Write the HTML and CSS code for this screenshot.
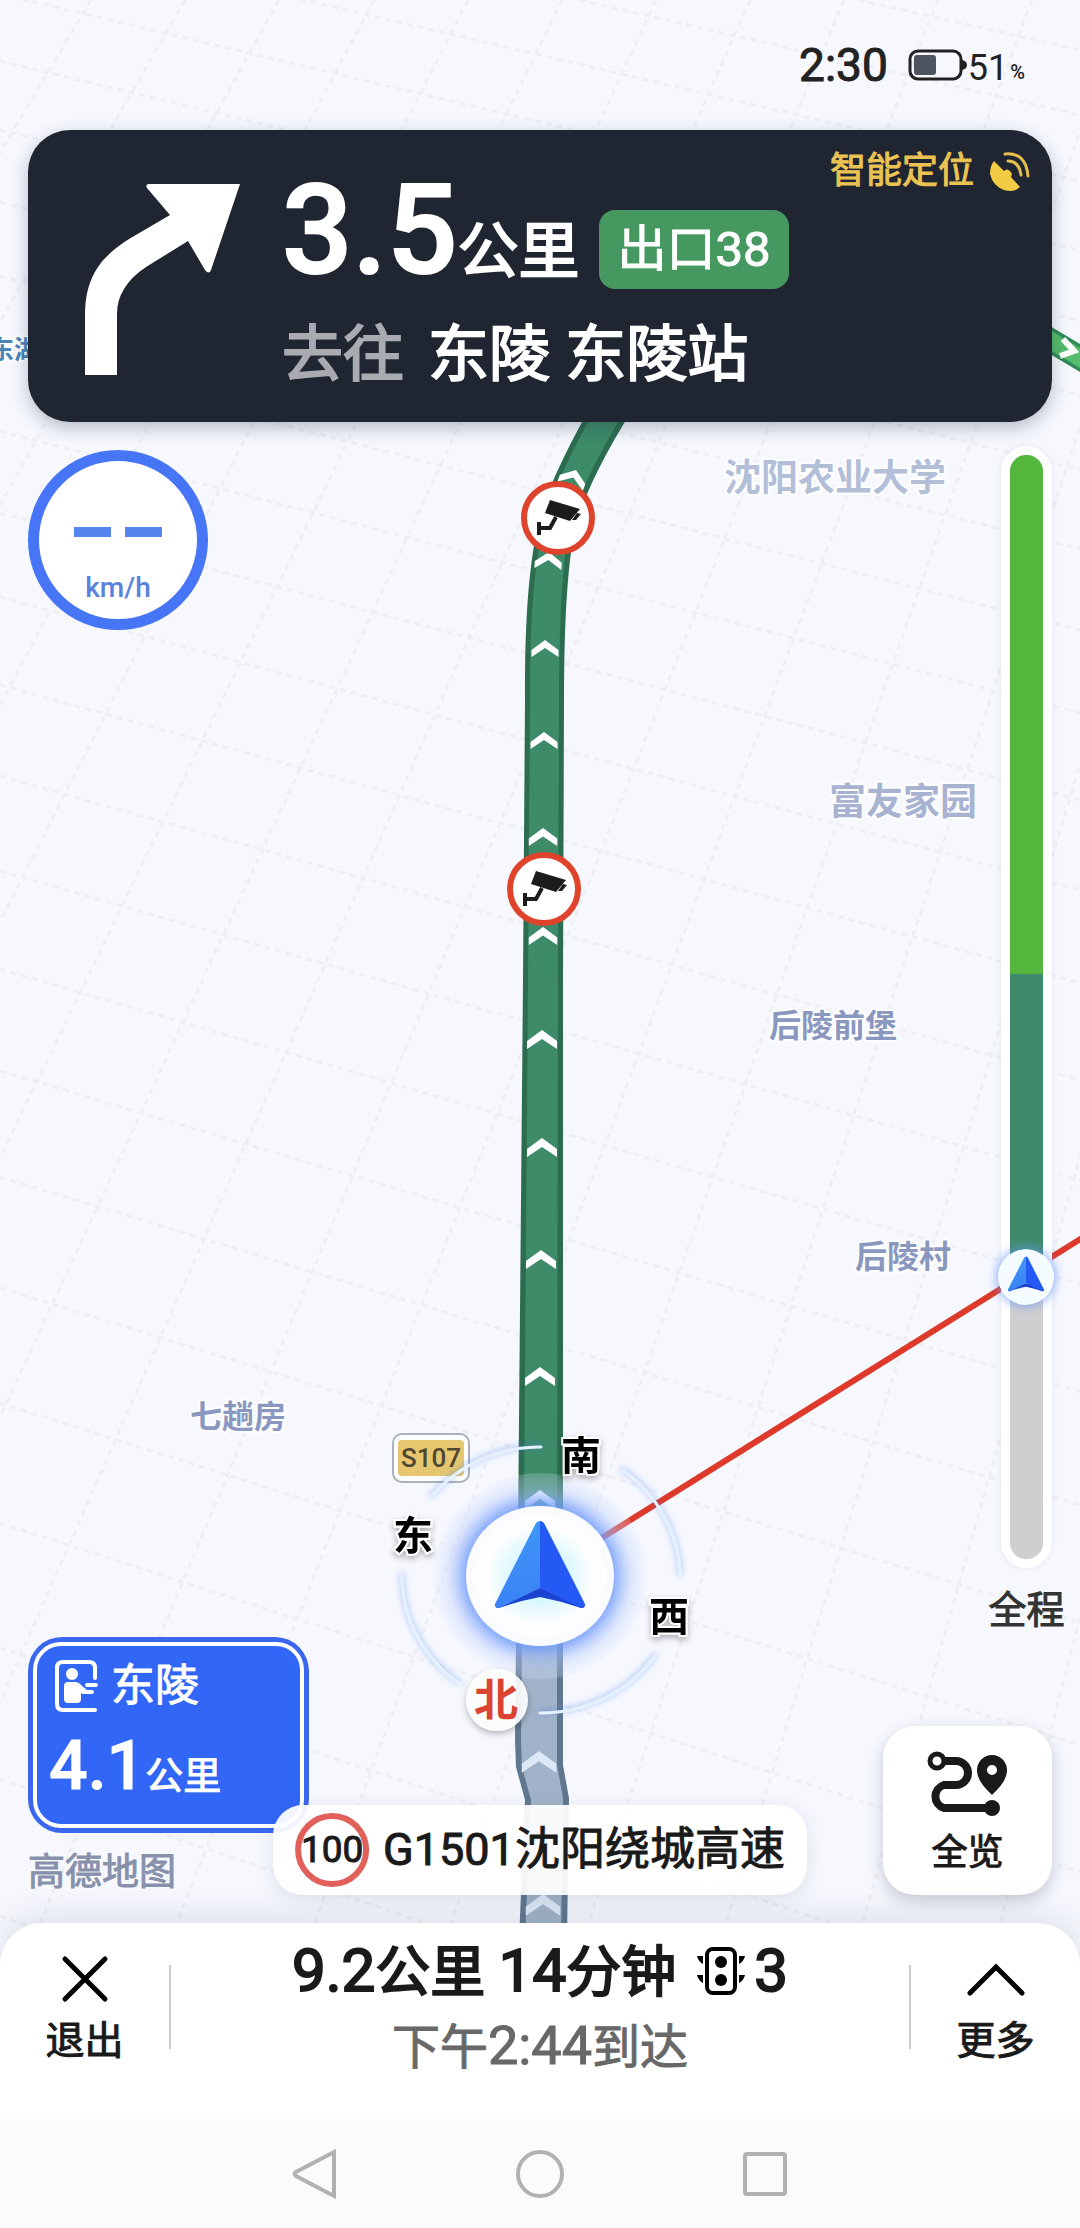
FILE: index.html
```html
<!DOCTYPE html>
<html lang="zh-CN">
<head>
<meta charset="utf-8">
<meta name="viewport" content="width=device-width, initial-scale=1">
<title>导航</title>
<link rel="stylesheet" href="styles.css">
</head>
<body>
<div class="app">
  <svg class="map" viewBox="0 0 1080 1940" role="img" aria-label="导航地图">
    <defs>
      <linearGradient id="fin" x1="0" y1="0" x2="0" y2="1">
        <stop offset="0" stop-color="#4096f8"/><stop offset="1" stop-color="#3a83f5"/>
      </linearGradient>
      <radialGradient id="halo">
        <stop offset="0.6" stop-color="#5d8bfb"/><stop offset="0.72" stop-color="#7ea5fb" stop-opacity="0.75"/>
        <stop offset="0.86" stop-color="#b9cdfb" stop-opacity="0.4"/><stop offset="1" stop-color="#dfe8fd" stop-opacity="0.2"/>
      </radialGradient>
      <radialGradient id="disc">
        <stop offset="0" stop-color="#aeefff"/><stop offset="0.45" stop-color="#d9f8ff"/><stop offset="0.8" stop-color="#fefefe"/>
      </radialGradient>
      <filter id="drop" x="-30%" y="-30%" width="160%" height="170%">
        <feDropShadow dx="0" dy="3" stdDeviation="3" flood-color="#000" flood-opacity="0.3"/>
      </filter>
      <filter id="soft" x="-20%" y="-20%" width="140%" height="140%">
        <feDropShadow dx="0" dy="-1" stdDeviation="3" flood-color="#3f74e8" flood-opacity="0.6"/>
      </filter>
      <symbol id="pointer" viewBox="0 0 90 88" overflow="visible">
        <path d="M45 67 L45 76 Q24 80 4 87 Q-1 87 1 82 Z M45 67 L45 76 Q66 80 86 87 Q91 87 89 82 Z" fill="#1c43cf"/>
        <path d="M45 0 V67 L4 87 Q-2 87 1 81 L41 2 Q43 0 45 0 Z" fill="url(#fin)"/>
        <path d="M45 0 V67 L86 87 Q92 87 89 81 L49 2 Q47 0 45 0 Z" fill="#2559f4"/>
      </symbol>
      <g id="camera">
        <circle r="34" fill="#fff" stroke="#e0432c" stroke-width="6"/>
        <path d="M-8-18 22-9 12 3-13-5Z M19-5 23-4 18 2 14 2Z" fill="#1c1c1c"/>
        <path d="M-2-1-8 10H-18 M-19 4V17" fill="none" stroke="#1c1c1c" stroke-width="4"/>
      </g>
      <path id="chevron" d="M0 0 15 11V19L0 9-15 19V11Z"/>
    </defs>

    <g id="grid" class="grid"></g>

    <text class="label station" x="-12" y="359">东湖</text>
    <path d="M1030 328 1100 370" stroke="#2f8b57" stroke-width="24"/>
    <path d="M1030 328 1100 370" stroke="#56bd6c" stroke-width="17"/>
    <path d="M1063 339 1074 351 1060 356" fill="none" stroke="#fff" stroke-width="6"/>

    <text class="label place-xl" x="724" y="491">沈阳农业大学</text>
    <text class="label place-xl place-lg" x="829" y="815">富友家园</text>
    <text class="label place" x="769" y="1037">后陵前堡</text>
    <text class="label place" x="855" y="1268">后陵村</text>
    <text class="label place" x="190" y="1428">七趟房</text>

    <path d="M516 1640 515 1740 516 1767 525 1800 519 1940H567L569 1798 563 1765V1640Z" fill="#5f7890"/>
    <path d="M522 1640 521 1740 522 1767 531 1800 525 1940H561L563 1798 557 1765V1640Z" fill="#a1b3c8"/>
    <path d="M600 390 Q556 466 542 510 Q524 570 525 700 L523 980 517 1640H563V980L564 700 Q564 570 577 520 Q595 466 645 390Z" fill="#2c6d50"/>
    <path d="M606 390 Q562 466 548 510 Q529 570 530 700 L528 980 523 1640H557L558 980 559 700 Q559 570 571 520 Q589 466 638 390Z" fill="#3d8b69"/>
    <g fill="#fff">
      <use href="#chevron" transform="translate(576 470) rotate(20) scale(0.9)"/>
      <use href="#chevron" transform="translate(549 552) rotate(4) scale(0.9)"/>
      <use href="#chevron" transform="translate(545 640) scale(0.9)"/>
      <use href="#chevron" transform="translate(544 732) scale(0.9)"/>
      <use href="#chevron" transform="translate(543 828) scale(0.95)"/>
      <use href="#chevron" transform="translate(543 927) scale(0.95)"/>
      <use href="#chevron" x="542" y="1030"/>
      <use href="#chevron" x="542" y="1138"/>
      <use href="#chevron" x="541" y="1250"/>
      <use href="#chevron" x="540" y="1367"/>
      <use href="#chevron" x="540" y="1490"/>
    </g>
    <g fill="#dce8f6">
      <use href="#chevron" transform="translate(539 1751) scale(1.15)"/>
      <use href="#chevron" transform="translate(543 1894) scale(1.15)"/>
    </g>
    <use href="#camera" x="558" y="518"/>
    <use href="#camera" x="544" y="889"/>

    <rect x="393" y="1434" width="76" height="48" rx="9" fill="#fff" stroke="#a9b1ba" stroke-width="2"/>
    <rect x="398" y="1440" width="66" height="36" rx="4" fill="#e6c770"/>
    <text class="road-no" x="431" y="1467">S107</text>

    <path d="M1090 1233 560 1564" stroke="#dd3a2c" stroke-width="6"/>

    <ellipse cx="540" cy="1576" rx="107" ry="103" fill="url(#halo)"/>
    <ellipse cx="540" cy="1576" rx="74" ry="70" fill="#fff" fill-opacity="0.96"/>
    <ellipse cx="540" cy="1576" rx="66" ry="62" fill="url(#disc)" fill-opacity="0.9"/>
    <use href="#pointer" x="495" y="1521" width="90" height="88"/>
    <g fill="none" stroke="#e4f1ff" stroke-width="3" stroke-linecap="round" filter="url(#soft)">
      <path d="M541 1447 A139 133 0 0 0 431 1497"/>
      <path d="M622 1470 A139 133 0 0 1 680 1576"/>
      <path d="M655 1656 A139 133 0 0 1 540 1713"/>
      <path d="M402 1575 A139 133 0 0 0 460 1684"/>
    </g>
    <g class="compass" filter="url(#drop)">
      <text x="581" y="1470">南</text>
      <text x="413" y="1550">东</text>
      <text x="669" y="1631">西</text>
    </g>
    <circle cx="497" cy="1700" r="31" fill="#fff" fill-opacity="0.9" filter="url(#drop)"/>
    <text class="north" x="496" y="1716">北</text>
  </svg>

  <header class="status">
    <span class="clock">2:30</span>
    <svg class="battery" width="60" height="34" viewBox="0 0 60 34" aria-hidden="true">
      <rect x="2" y="3" width="51" height="28" rx="8" fill="none" stroke="#222" stroke-width="3"/>
      <rect x="6" y="7" width="22" height="20" rx="3" fill="#4c545f"/>
      <path d="M54 12Q59 13 59 17T54 22Z" fill="#222"/>
    </svg>
    <span class="charge">51</span><span class="percent">%</span>
  </header>

  <section class="turn">
    <svg class="turn-arrow" width="156" height="191" viewBox="0 0 156 191" aria-label="右转">
      <path d="M1 191V130Q1 102 14 83Q23 69 45 55L86 31 63 4Q61 0 65 0H156L127 86Q125 91 121 86L104 57 62 83Q47 93 40 105Q33 116 33 130V191Z" fill="#fff"/>
    </svg>
    <div class="turn-text">
      <div class="turn-main">
        <p class="distance"><b>3.5</b>公里</p>
        <span class="exit">出口38</span>
      </div>
      <p class="heading"><span class="muted">去往</span><span>东陵 东陵站</span></p>
    </div>
    <div class="gps">
      <span>智能定位</span>
      <svg width="40" height="40" viewBox="0 0 40 40" aria-hidden="true">
        <path d="M4 9 14 19Q17 16 20 19T21 25L30 35Q24 41 14 38Q3 34 0 22Q0 14 4 9Z" fill="#f3cc45"/>
        <path d="M15 2Q36 0 38 24M18 9Q29 9 31 23" fill="none" stroke="#e4bf4b" stroke-width="3" stroke-linecap="round"/>
      </svg>
    </div>
  </section>

  <main class="stage">
    <div class="left">
      <div class="speed">
        <div class="dashes" role="img" aria-label="暂无车速"><i></i><i></i></div>
        <span>km/h</span>
      </div>
      <div class="left-foot">
        <div class="service">
          <div class="service-in">
            <p class="service-name">
              <svg width="44" height="52" viewBox="0 0 44 52" aria-hidden="true">
                <path d="M40 18V8Q40 2 34 2H8Q2 2 2 8V44Q2 50 8 50H40" fill="none" stroke="#fff" stroke-width="4" stroke-linecap="round"/>
                <circle cx="17" cy="14" r="6" fill="#fff"/>
                <path d="M13 22H20Q24 22 27 26L32 30V34Q28 34 26 32V39Q26 43 22 43H13Q9 43 9 39V26Q9 22 13 22Z" fill="#fff"/>
                <path d="M32 25H41M28 32H37" stroke="#fff" stroke-width="4" stroke-linecap="round"/>
              </svg>
              <span>东陵</span>
            </p>
            <p class="service-dist"><b>4.1</b>公里</p>
          </div>
        </div>
        <p class="brand">高德地图</p>
      </div>
    </div>

    <div class="right">
      <div class="trip">
        <div class="track">
          <div class="fast"></div>
          <div class="road"></div>
          <div class="done">
            <svg class="marker" width="56" height="56" viewBox="0 0 56 56" aria-hidden="true">
              <circle cx="28" cy="28" r="28" fill="#f4fcff"/>
              <use href="#pointer" x="10" y="7" width="36" height="36"/>
            </svg>
          </div>
        </div>
        <span class="trip-label">全程</span>
      </div>
      <button class="overview" type="button">
        <svg width="82" height="66" viewBox="0 0 82 66" aria-hidden="true">
          <path d="M16 10H29A12 12 0 0 1 29 34H17A12 12 0 0 0 17 57H66" fill="none" stroke="#1a1a1a" stroke-width="8"/>
          <circle cx="10" cy="10" r="7" fill="#fff" stroke="#1a1a1a" stroke-width="5"/>
          <circle cx="65" cy="57" r="8" fill="#1a1a1a"/>
          <path fill-rule="evenodd" d="M65 4A15 15 0 0 1 80 20Q80 30 65 44Q50 30 50 20A15 15 0 0 1 65 4ZM65 14A5 5 0 1 0 65 24A5 5 0 1 0 65 14Z" fill="#1a1a1a"/>
        </svg>
        全览
      </button>
    </div>

    <div class="road-pill"><span class="limit">100</span><span>G1501沈阳绕城高速</span></div>
  </main>

  <footer class="panel">
    <button class="action" type="button">
      <svg width="60" height="48" viewBox="0 0 60 48" aria-hidden="true"><path d="M10 4 50 44M50 4 10 44" stroke="#000" stroke-width="5" stroke-linecap="round"/></svg>
      退出
    </button>
    <div class="summary">
      <p class="remain">
        <span><b>9.2</b>公里 <b>14</b>分钟</span>
        <svg width="50" height="50" viewBox="0 0 50 50" aria-label="红绿灯">
          <rect x="11" y="3" width="28" height="44" rx="6" fill="none" stroke="#000" stroke-width="4"/>
          <circle cx="25" cy="16" r="6"/><circle cx="25" cy="34" r="6"/>
          <path d="M1 10H7V18Q2 15 1 10ZM1 29H7V37Q2 34 1 29ZM49 10H43V18Q48 15 49 10ZM49 29H43V37Q48 34 49 29Z"/>
        </svg>
        <b>3</b>
      </p>
      <p class="arrive">下午<time datetime="14:44">2:44</time>到达</p>
    </div>
    <button class="action" type="button">
      <svg width="60" height="48" viewBox="0 0 60 48" aria-hidden="true"><path d="M4 38 30 12 56 38" fill="none" stroke="#000" stroke-width="5" stroke-linecap="round"/></svg>
      更多
    </button>
  </footer>

  <nav class="system">
    <button type="button" aria-label="返回"><svg width="48" height="52" viewBox="0 0 48 52"><path d="M43 4V48L5 28Q2 26 5 24Z"/></svg></button>
    <button type="button" aria-label="主屏幕"><svg width="48" height="52" viewBox="0 0 48 52"><circle cx="24" cy="26" r="22"/></svg></button>
    <button type="button" aria-label="最近任务"><svg width="48" height="52" viewBox="0 0 48 52"><rect x="4" y="6" width="40" height="40" rx="2"/></svg></button>
  </nav>
</div>
<script src="map.js"></script>
</body>
</html>
```
FILE: styles.css
```css
* { box-sizing: border-box; }

body {
  margin: 0;
  background: #f6f8fe;
  color: #1a1a1a;
  font-family: Roboto, "Noto Sans CJK SC", sans-serif;
  font-weight: 400;
  -webkit-text-stroke: 1px currentColor;
}

p { margin: 0; }

b { font-weight: 400; }

button {
  border: 0;
  padding: 0;
  background: none;
  color: inherit;
  font: inherit;
}

.app {
  position: relative;
  display: flex;
  flex-direction: column;
  min-height: 100vh;
  overflow: hidden;
}

/* Map canvas, under all the controls */
.map {
  position: absolute;
  top: 0;
  left: 0;
  width: 100%;
  -webkit-text-stroke: 0;
}

.grid {
  fill: none;
  stroke: #edeff4;
  stroke-width: 3;
  stroke-dasharray: 6 5;
}

.label {
  font-weight: 700;
  paint-order: stroke;
  stroke: #fff;
  stroke-width: 4px;
  stroke-linejoin: round;
}

.station { font-size: 26px; fill: #4986b8; }
.place-xl { font-size: 37px; fill: #b3bfd8; }
.place-lg { fill: #a8b3d1; }
.place { font-size: 32px; fill: #8a98c0; }

.road-no {
  font-size: 26px;
  font-weight: 500;
  fill: #4f4732;
  text-anchor: middle;
}

.compass text {
  font-size: 40px;
  font-weight: 700;
  text-anchor: middle;
  fill: #000;
  paint-order: stroke;
  stroke: #fff;
  stroke-width: 4px;
}

.north {
  font-size: 44px;
  font-weight: 700;
  text-anchor: middle;
  fill: #d9432f;
}

/* Status bar */
.status {
  position: relative;
  display: flex;
  align-items: flex-end;
  height: 130px;
  padding: 0 55px 40px 0;
  justify-content: flex-end;
  color: #222;
  -webkit-text-stroke: 0;
}

.clock { font-size: 46px; line-height: 50px; -webkit-text-stroke: 1px #222; }
.battery { margin: 0 0 8px 20px; }
.charge { font-size: 36px; line-height: 44px; }
.percent { font-size: 20px; line-height: 36px; margin-left: 2px; font-weight: 500; }

/* Next manoeuvre */
.turn {
  position: relative;
  display: flex;
  margin: 0 28px;
  padding: 20px 22px 31px 56px;
  border-radius: 42px;
  background: #1f2531;
  color: #fff;
  box-shadow: 0 6px 18px rgba(40, 45, 70, 0.3);
}

.turn-arrow { flex: none; margin-top: 34px; }

.turn-text {
  flex: 1;
  margin: 17px 0 0 42px;
  -webkit-text-stroke: 2px currentColor;
}

.turn-main {
  display: flex;
  align-items: flex-end;
  gap: 20px;
}

.distance {
  display: flex;
  align-items: baseline;
  font-size: 61px;
  line-height: 60px;
}

.distance b { font-size: 124px; font-weight: 500; line-height: 128px; }

.exit {
  margin-bottom: 6px;
  padding: 0 18px;
  border-radius: 16px;
  background: #45985f;
  font-size: 49px;
  line-height: 79px;
  -webkit-text-stroke: 1px currentColor;
}

.heading {
  display: flex;
  gap: 24px;
  margin-top: 24px;
  font-size: 61px;
  line-height: 72px;
}

.muted { color: #a9abb0; }

.gps {
  display: flex;
  gap: 16px;
  align-items: flex-start;
  position: absolute;
  top: 22px;
  right: 22px;
  font-size: 36px;
  line-height: 38px;
  color: #ebc353;
}

/* Floating controls */
.stage {
  position: relative;
  flex: 1;
  display: flex;
  justify-content: space-between;
  padding: 24px 28px 28px;
}

.left {
  display: flex;
  flex-direction: column;
  justify-content: space-between;
  padding-top: 4px;
}

.speed {
  display: flex;
  flex-direction: column;
  align-items: center;
  width: 180px;
  height: 180px;
  padding-top: 66px;
  border: 11px solid #4676f6;
  border-radius: 50%;
  background: #fff;
  color: #5a82de;
  font-size: 28px;
  font-weight: 500;
  line-height: 32px;
  -webkit-text-stroke: 0;
}

.dashes { display: flex; gap: 14px; margin-bottom: 35px; }
.dashes i { width: 37px; height: 10px; background: #5586f0; }

.service {
  width: 281px;
  padding: 5px;
  border-radius: 34px;
  background: #3a67ee;
  color: #fff;
}

.service-in {
  height: 186px;
  padding: 12px 12px;
  border: 4px solid #fff;
  border-radius: 28px;
  background: #3166f6;
}

.service-name {
  display: flex;
  align-items: center;
  gap: 12px;
  padding-left: 6px;
  font-size: 44px;
  line-height: 56px;
}

.service-dist {
  display: flex;
  align-items: baseline;
  margin-top: 18px;
  font-size: 38px;
  line-height: 38px;
}

.service-dist b { font-size: 68px; font-weight: 500; line-height: 68px; }

.brand {
  margin-top: 16px;
  margin-bottom: -2px;
  font-size: 37px;
  line-height: 48px;
  color: #8891ac;
  text-shadow: 0 0 3px #fff;
}

.right {
  display: flex;
  flex-direction: column;
  align-items: flex-end;
  gap: 94px;
}

.trip {
  flex: 1;
  display: flex;
  flex-direction: column;
  align-items: center;
  gap: 20px;
  width: 51px;
}

.track {
  flex: 1;
  display: flex;
  flex-direction: column;
  width: 51px;
  padding: 9px;
  border-radius: 26px;
  background: #fff;
  box-shadow: 0 0 6px rgba(60, 70, 110, 0.1);
}

.fast { flex: 519; border-radius: 16px 16px 0 0; background: #55b63e; }
.road { flex: 302; background: #3e8a6b; }

.done {
  position: relative;
  flex: 282;
  border-radius: 0 0 16px 16px;
  background: #cfcfcf;
}

.marker {
  position: absolute;
  left: -12px;
  top: -28px;
  border-radius: 50%;
  box-shadow: 0 0 12px #6d97fb;
}

.trip-label {
  font-size: 38px;
  line-height: 44px;
  white-space: nowrap;
  color: #333;
  text-shadow: 0 0 3px #fff, 0 0 3px #fff;
}

.overview {
  display: flex;
  flex-direction: column;
  align-items: center;
  gap: 14px;
  width: 169px;
  height: 169px;
  padding-top: 25px;
  border-radius: 32px;
  background: #fff;
  font-size: 36px;
  line-height: 44px;
  box-shadow: 0 6px 16px rgba(60, 65, 90, 0.25);
}

.road-pill {
  position: absolute;
  left: 50%;
  bottom: 28px;
  transform: translateX(-50%);
  display: flex;
  align-items: center;
  gap: 14px;
  height: 90px;
  padding: 0 22px;
  border-radius: 30px;
  background: rgba(255, 255, 255, 0.93);
  box-shadow: 0 4px 20px rgba(60, 65, 90, 0.12);
  font-size: 45px;
  line-height: 64px;
  white-space: nowrap;
}

.limit {
  display: flex;
  align-items: center;
  justify-content: center;
  width: 74px;
  height: 74px;
  border: 6px solid #e1605a;
  border-radius: 50%;
  background: #fff;
  font-size: 37px;
}

/* Trip summary */
.panel {
  position: relative;
  display: flex;
  height: 196px;
  border-radius: 42px 42px 0 0;
  background: #fff;
  box-shadow: 0 -4px 36px rgba(50, 55, 70, 0.14);
}

.action {
  display: flex;
  flex-direction: column;
  align-items: center;
  gap: 14px;
  width: 169px;
  padding-top: 32px;
  font-size: 39px;
  line-height: 48px;
}

.summary {
  flex: 1;
  height: 84px;
  margin-top: 42px;
  padding-top: 4px;
  border: solid #ccc;
  border-width: 0 2px;
  display: flex;
  flex-direction: column;
  align-items: center;
  justify-content: center;
  gap: 4px;
}

.remain {
  display: flex;
  align-items: center;
  font-size: 55px;
  line-height: 72px;
  -webkit-text-stroke: 2px currentColor;
}

.remain b { font-size: 60px; }
.remain svg { margin: 0 8px 0 20px; }

.arrive {
  font-size: 48px;
  line-height: 72px;
  color: #686868;
}

.arrive time { font-size: 54px; line-height: 64px; }

/* System navigation */
.system {
  position: relative;
  display: flex;
  justify-content: center;
  gap: 177px;
  height: 109px;
  background: #fbfbfb;
}

.system svg {
  display: block;
  fill: none;
  stroke: #b1b1b1;
  stroke-width: 4;
}
```
FILE: map.js
```js
// Draws the dashed ground grid in perspective: two families of lines,
// each running to its own vanishing point on the horizon.
const grid = document.getElementById('grid');
const HORIZON = -4200;
const BOTTOM = 1940;

function line(x1, y1, x2, y2) {
  const el = document.createElementNS('http://www.w3.org/2000/svg', 'line');
  el.setAttribute('x1', Math.round(x1));
  el.setAttribute('y1', Math.round(y1));
  el.setAttribute('x2', Math.round(x2));
  el.setAttribute('y2', Math.round(y2));
  grid.appendChild(el);
}

for (let k = -2; k < 18; k++) {
  const s = 0.5973 - 0.0224 * k;
  line(2600 + s * HORIZON, 0, 2600 - s * (BOTTOM - HORIZON), BOTTOM);
}

for (let k = -4; k < 24; k++) {
  const t = 4.22 - 0.0663 * k;
  line(0, 17700 / t + HORIZON, 1080, 18780 / t + HORIZON);
}
```
